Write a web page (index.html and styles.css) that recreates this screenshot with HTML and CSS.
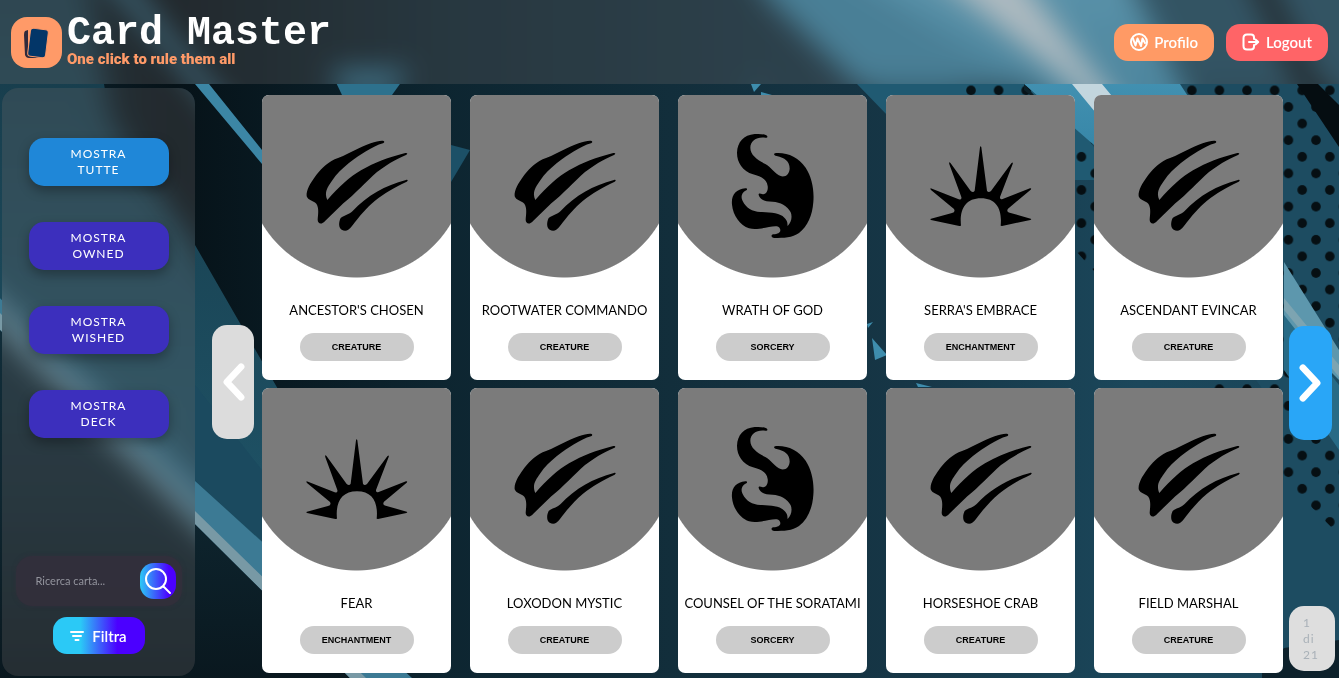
FILE: index.html
```html
<!DOCTYPE html>
<html lang="it">
<head>
<meta charset="utf-8">
<meta name="viewport" content="width=device-width, initial-scale=1">
<title>Card Master</title>
<link rel="stylesheet" href="styles.css">
</head>
<body>
<svg class="backdrop" viewBox="0 0 1339 678" preserveAspectRatio="xMidYMid slice" aria-hidden="true">
  <defs>
    <linearGradient id="base" x1="0" x2="1" y1="0" y2="0">
      <stop offset="0" stop-color="#0d2530"/><stop offset=".06" stop-color="#0c222c"/><stop offset=".16" stop-color="#061218"/>
      <stop offset=".34" stop-color="#0d2530"/><stop offset=".5" stop-color="#122e3b"/>
      <stop offset=".66" stop-color="#163646"/><stop offset=".82" stop-color="#1b475b"/><stop offset="1" stop-color="#1a4558"/>
    </linearGradient>
    <linearGradient id="left" x1="0" x2="0" y1="0" y2="1">
      <stop offset="0" stop-color="#163846"/><stop offset="1" stop-color="#1f5468"/>
    </linearGradient>
    <linearGradient id="foot" x1="0" x2="0" y1="0" y2="1">
      <stop offset="0" stop-color="#12303d"/><stop offset=".5" stop-color="#0e252f"/><stop offset="1" stop-color="#081319"/>
    </linearGradient>
    <linearGradient id="beam" x1="0" x2="0" y1="0" y2="1">
      <stop offset="0" stop-color="#57a5c4"/><stop offset="1" stop-color="#3887a8"/>
    </linearGradient>
    <pattern id="dots" width="27.6" height="33.2" patternUnits="userSpaceOnUse" patternTransform="translate(1288.4 107)">
      <circle cx="0" cy="0" r="4.8"/><circle cx="27.6" cy="0" r="4.8"/><circle cx="0" cy="33.2" r="4.8"/><circle cx="27.6" cy="33.2" r="4.8"/><circle cx="13.8" cy="16.6" r="4.8"/>
    </pattern>
    <filter id="haze" filterUnits="userSpaceOnUse" x="-60" y="-60" width="1460" height="800" color-interpolation-filters="sRGB">
      <feGaussianBlur stdDeviation="14"/>
    </filter>
  </defs>
  <g id="scene">
    <rect x="-60" y="-60" width="1460" height="800" fill="url(#base)"/>
    <path d="M-60 -60H80L110 120 195 245 290 410V560L195 500 -60 280Z" fill="url(#left)"/>
    <path d="M195 385 262 470V541L195 481Z" fill="#1b4a5f"/>
    <path d="M-60 270 195 524 350 678V740H-60Z" fill="url(#foot)"/>
    <path d="M-60 242 195 481 412 678H350L195 524 -60 270Z" fill="#3c7a94"/>
    <path d="M-60 252 195 511 366 678H350L195 524 -60 270Z" fill="#7899a5"/>
    <path d="M92 -40H108L209 84 262 150 300 200V210L262 164 195 84Z" fill="#3c86a5"/>
    <path d="M330 70H410L392 95H342Z" fill="#2d718d"/>
    <path d="M451 145 470 150 451 182Z" fill="#1c5067"/>
    <path d="M751 84H761L754 92ZM761 92 772 95H761ZM867 324 873 322 868 328ZM872 338 887 355 875 360ZM916 383 932 387H918Z" fill="#3e8dad"/>
    <path d="M730 -60H1000L1024 84H857L770 0Z" fill="#3b86a5"/>
    <path d="M857 84H1024L1100 150V180H950Z" fill="#205a72"/>
    <path d="M1140 -60H1400V740H1284L1270 400 1075 120Z" fill="#1d4c61"/>
    <path d="M955 84H1339V535L1280 475 1075 250Z" fill="url(#dots)" opacity=".8"/>
    <path d="M800 -60H1110L1180 84 1210 130H1110L1095 146 1024 84Z" fill="url(#beam)"/>
    <path d="M890 -60H990L1102 84 1140 130H1110L1072 84Z" fill="#c3d6de"/>
    <path d="M1024 84 1034 95H1030L1024 90Z" fill="#0c2028"/>
    <path d="M1230 -60H1250L1318 84 1339 105V147L1297 84Z" fill="#050d11"/>
    <path d="M1284 262 1339 350V380L1284 325Z" fill="#5d97ad"/>
    <path d="M1284 298 1339 365V377L1284 310Z" fill="#7da4b1"/>
    <path d="M1284 315 1339 385V450L1284 370Z" fill="#286b86"/>
    <path d="M1262 673 1284 648 1339 640V678H1262Z" fill="#0d212b"/>
  </g>
</svg>

<svg class="sprite" aria-hidden="true">
  <symbol id="creature" viewBox="4 0 390 390">
    <path d="M279 63C282 65 281 68 277 70C261 74 244 84 226 94C196 112 151 143 124 182C110 202 100 216 110 240C143 201 180 169 211 151C253 127 292 112 344 99C351 98 352 102 346 105C309 121 285 137 259 156C228 183 192 223 158 250L104 302C94 314 82 313 81 300C82 284 86 264 77 251C67 242 52 241 48 229C46 210 60 189 72 172C88 150 105 132 132 118C164 108 204 82 240 70C257 65 270 61 279 63Z"/>
    <path d="M346 180C352 178 353 182 348 185C309 203 282 219 253 242C227 264 208 286 184 318C174 332 164 336 153 329C143 323 144 306 150 294C161 285 175 284 186 273C229 227 284 196 346 180Z"/>
  </symbol>
  <symbol id="flame" viewBox="-36 0 390 390">
    <path d="M139 46C145 50 142 54 136 53C112 49 91 62 91 83C91 105 112 119 136 132C153 141 163 161 184 169C200 171 208 160 209 146C209 124 194 113 170 108C160 105 160 100 168 99C204 97 235 112 257 143C276 172 283 210 280 246C277 287 263 319 237 339C217 353 191 354 163 354C153 353 152 344 160 343C175 342 184 337 180 326C176 316 162 319 147 321C124 325 107 330 87 325C61 316 39 287 36 254C33 226 47 208 76 205C84 205 82 210 76 212C64 219 62 232 68 243C78 264 97 275 121 276C152 277 180 279 193 293C204 303 202 311 203 318C215 306 217 289 212 277C202 256 181 247 158 245C136 245 120 240 116 225C115 219 121 220 126 222C139 226 145 210 143 198C140 177 122 169 99 163C68 153 51 128 51 98C52 66 71 45 104 42C119 41 132 42 139 46Z"/>
  </symbol>
  <symbol id="sun" viewBox="-12 -30 390 390">
    <path d="M180 52Q182 46 184 52L201 182Q205 190 213 183L274 100Q280 94 278 102L240 201Q239 210 248 207L330 175Q336 174 332 179L264 236Q258 246 269 248L332 266Q336 268 331 270L246 288L242 287C247 239 230 205 183 205C136 205 118 239 123 287L118 288L33 270Q29 268 33 266L96 249Q107 246 102 237L33 180Q28 173 36 176L116 208Q126 210 124 201L88 103Q86 93 92 100L152 183Q160 190 164 182Z"/>
  </symbol>
  <symbol id="chevron" viewBox="0 0 24 40">
    <path d="M20 4 5 20 20 36" fill="none" stroke="#fff" stroke-width="7" stroke-linecap="round" stroke-linejoin="round"/>
  </symbol>
</svg>

<header class="topbar">
  <svg class="frost" viewBox="0 0 1339 678" preserveAspectRatio="xMidYMid slice" aria-hidden="true"><use href="#scene" filter="url(#haze)"/></svg>
  <div class="brand">
    <div class="logo">
      <svg viewBox="0 0 51 51" aria-hidden="true">
        <path d="M17 13 14 14Q13 15 13 18L14 38Q15 41 18 41L28 41 17 38Z" fill="#302a3c"/>
        <rect x="18" y="12" width="18" height="28" rx="3" transform="rotate(7 27 26)" fill="#033668" stroke="#ff9a68" stroke-width="1"/>
      </svg>
    </div>
    <div>
      <h1 class="title">Card Master</h1>
      <p class="tagline">One click to rule them all</p>
    </div>
  </div>
  <nav class="actions">
    <button class="action profile" type="button">
      <svg viewBox="0 0 18 18" aria-hidden="true"><circle cx="9" cy="9" r="8"/><path d="M3 5.500 5.500 12.500 7.500 5.500 11 13 12.500 5.500 15 10"/></svg>
      Profilo
    </button>
    <button class="action logout" type="button">
      <svg viewBox="0 0 18 18" aria-hidden="true"><path d="M12 6V4.500Q12 1.500 9 1.500H5Q1.500 1.500 1.500 5V13Q1.500 16.500 5 16.500H9Q12 16.500 12 13.500V12M7 9H16M13.500 6.500 16.200 9 13.500 11.500"/></svg>
      Logout
    </button>
  </nav>
</header>

<div class="layout">
  <aside class="sidebar">
    <svg class="frost" viewBox="0 0 1339 678" preserveAspectRatio="xMidYMid slice" aria-hidden="true"><use href="#scene" filter="url(#haze)"/></svg>
    <div class="modes">
      <button class="mode active" type="button">Mostra tutte</button>
      <button class="mode" type="button">Mostra owned</button>
      <button class="mode" type="button">Mostra wished</button>
      <button class="mode" type="button">Mostra deck</button>
    </div>
    <div class="tools">
      <form class="search">
        <input class="query" type="text" aria-label="Ricerca carta" placeholder="Ricerca carta...">
        <button class="go" type="button" aria-label="Cerca">
          <svg viewBox="0 0 30 30" aria-hidden="true"><circle cx="13" cy="13" r="10"/><path d="M20.500 20.500 27 27"/></svg>
        </button>
      </form>
      <button class="filter" type="button">
        <svg viewBox="0 0 14 10" aria-hidden="true"><path d="M1 1H13M3 5H11M5.500 9H8.500"/></svg>
        Filtra
      </button>
    </div>
  </aside>

  <div class="pager">
    <button class="arrow prev" type="button" aria-label="Pagina precedente" disabled><svg aria-hidden="true"><use href="#chevron"/></svg></button>
  </div>

  <main class="cards">
    <article class="card"><div class="art"><svg><use href="#creature"/></svg></div><h2>Ancestor's Chosen</h2><span class="kind">CREATURE</span></article>
    <article class="card"><div class="art"><svg><use href="#creature"/></svg></div><h2>Rootwater Commando</h2><span class="kind">CREATURE</span></article>
    <article class="card"><div class="art"><svg><use href="#flame"/></svg></div><h2>Wrath of God</h2><span class="kind">SORCERY</span></article>
    <article class="card"><div class="art"><svg><use href="#sun"/></svg></div><h2>Serra's Embrace</h2><span class="kind">ENCHANTMENT</span></article>
    <article class="card"><div class="art"><svg><use href="#creature"/></svg></div><h2>Ascendant Evincar</h2><span class="kind">CREATURE</span></article>
    <article class="card"><div class="art"><svg><use href="#sun"/></svg></div><h2>Fear</h2><span class="kind">ENCHANTMENT</span></article>
    <article class="card"><div class="art"><svg><use href="#creature"/></svg></div><h2>Loxodon Mystic</h2><span class="kind">CREATURE</span></article>
    <article class="card"><div class="art"><svg><use href="#flame"/></svg></div><h2>Counsel of the Soratami</h2><span class="kind">SORCERY</span></article>
    <article class="card"><div class="art"><svg><use href="#creature"/></svg></div><h2>Horseshoe Crab</h2><span class="kind">CREATURE</span></article>
    <article class="card"><div class="art"><svg><use href="#creature"/></svg></div><h2>Field Marshal</h2><span class="kind">CREATURE</span></article>
  </main>

  <div class="pager forward">
    <button class="arrow next" type="button" aria-label="Pagina successiva"><svg aria-hidden="true"><use href="#chevron"/></svg></button>
    <p class="count">1<br>di<br>21</p>
  </div>
</div>
</body>
</html>
```
FILE: styles.css
```css
* { box-sizing: border-box; }

body {
  margin: 0;
  min-height: 100vh;
  display: flex;
  flex-direction: column;
  background: #0d2530;
  font-family: "Lato", "Noto Sans", sans-serif;
  color: #000;
}

button { border: 0; padding: 0; font: inherit; color: #fff; cursor: pointer; }
h1, h2, p { margin: 0; }

.backdrop { position: fixed; inset: 0; width: 100%; height: 100%; z-index: 0; }
.sprite { position: absolute; width: 0; height: 0; }

/* frosted panels: a hazy copy of the backdrop under a grey veil */
.topbar, .sidebar { position: relative; z-index: 1; overflow: hidden; }
.topbar::before, .sidebar::before {
  content: "";
  position: absolute;
  inset: 0;
  z-index: -1;
  background: rgba(115, 110, 110, .26);
}
.frost { position: absolute; top: 0; left: 0; width: 100vw; height: 100vh; z-index: -2; }
.sidebar .frost { top: -88px; left: -2px; }

.topbar {
  display: flex;
  align-items: center;
  justify-content: space-between;
  height: 84px;
  padding: 0 11px;
}

.brand { display: flex; align-items: center; gap: 5px; }
.logo { width: 51px; height: 51px; border-radius: 16px; background: #ff9a68; }
.logo svg { display: block; }
.title {
  font: bold 40px/34px "Liberation Mono", monospace;
  color: #fff;
  white-space: nowrap;
}
.tagline { font: 900 15px/16px "Roboto", sans-serif; color: #ff9a68; }

.actions { display: flex; gap: 12px; }
.action {
  display: flex;
  align-items: center;
  gap: 6px;
  height: 37px;
  padding: 0 16px;
  border-radius: 14px;
  font-size: 15px;
  font-weight: 600;
}
.action svg { width: 18px; height: 18px; fill: none; stroke: #fff; stroke-width: 2; stroke-linecap: round; stroke-linejoin: round; }
.profile { background: #ff9a65; }
.logout { background: #ff6467; }

.layout { position: relative; z-index: 1; flex: 1; display: flex; }

.sidebar {
  flex: none;
  display: flex;
  flex-direction: column;
  justify-content: space-between;
  width: 193px;
  margin: 4px 0 2px 2px;
  padding: 50px 0 22px;
  border-radius: 16px;
}
.modes { display: flex; flex-direction: column; align-items: center; gap: 36px; }
.mode {
  width: 140px;
  height: 48px;
  padding: 0 36px;
  border-radius: 15px;
  background: #3c2fbd;
  box-shadow: 0 5px 12px rgba(0, 0, 0, .3);
  font-size: 12px;
  line-height: 16px;
  letter-spacing: 1px;
  text-transform: uppercase;
}
.mode.active { background: #1f87d8; }

.tools { display: flex; flex-direction: column; align-items: center; gap: 11px; }
.search {
  display: flex;
  align-items: center;
  width: 166px;
  height: 50px;
  padding: 0 6px 0 20px;
  border-radius: 16px;
  background: rgba(54, 45, 60, .7);
  box-shadow: 0 0 4px rgba(54, 45, 60, .5);
}
.query {
  flex: 1;
  min-width: 0;
  padding: 0;
  border: 0;
  outline: 0;
  background: none;
  color: #fff;
  font-family: inherit;
  font-size: 11px;
  line-height: 16px;
}
.query::placeholder { color: #93949d; }
.go { width: 36px; height: 36px; border-radius: 14px; background: linear-gradient(90deg, #2bc9f6, #4b00ff 80%); }
.go svg { display: block; width: 30px; height: 30px; margin: 0 3px; fill: none; stroke: #fff; stroke-width: 2; stroke-linecap: round; }
.filter {
  display: flex;
  align-items: center;
  justify-content: center;
  gap: 8px;
  width: 92px;
  height: 37px;
  border-radius: 14px;
  background: linear-gradient(90deg, #2bc9f6 30%, #4b00ff 70%);
  font-size: 15px;
  font-weight: 600;
}
.filter svg { width: 14px; height: 10px; stroke: #fff; stroke-width: 2; stroke-linecap: round; }

.pager { flex: none; display: flex; flex-direction: column; padding: 241px 8px 0 17px; }
.arrow {
  display: flex;
  align-items: center;
  justify-content: center;
  width: 43px;
  height: 114px;
  border-radius: 15px;
}
.arrow svg { width: 23px; height: 38px; }
.prev { width: 42px; background: #dcdcdc; }
.next { background: #29a6f7; }
.next svg { transform: rotate(180deg); }
.forward { justify-content: space-between; padding: 242px 4px 7px 6px; }
.count {
  width: 46px;
  height: 65px;
  padding: 9px 14px;
  border-radius: 15px;
  background: #dedede;
  color: #a9b1b8;
  font-size: 12px;
  line-height: 16px;
  letter-spacing: 1px;
}

.cards {
  flex: 1;
  display: grid;
  grid-template-columns: repeat(5, minmax(0, 1fr));
  align-content: start;
  gap: 8px 19px;
  padding: 11px 0 5px;
}
.card {
  display: flex;
  flex-direction: column;
  align-items: center;
  height: 285px;
  overflow: hidden;
  border-radius: 7px;
  background: #fff;
}
.art {
  display: flex;
  justify-content: center;
  width: 100%;
  height: 183px;
  padding-top: 25px;
  background:
    linear-gradient(#7b7b7b, #7b7b7b) top / 100% 100px no-repeat,
    radial-gradient(circle at 50% 73px, #7b7b7b 109px, transparent 110px);
}
.art svg { width: 130px; height: 130px; }
.card h2 {
  margin: 22px 0 13px;
  font-size: 13px;
  font-weight: 400;
  line-height: 20px;
  white-space: nowrap;
  text-transform: uppercase;
}
.kind {
  width: 114px;
  border-radius: 14px;
  background: #ccc;
  font: bold 9px/28px "Liberation Sans", sans-serif;
  text-align: center;
}
```
